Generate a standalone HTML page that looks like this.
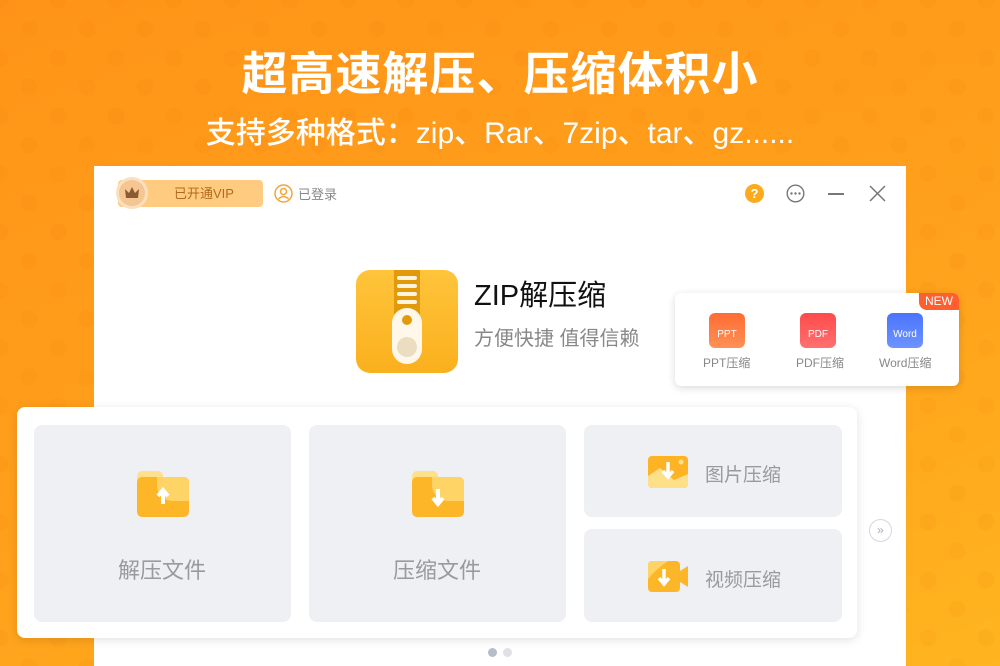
<!DOCTYPE html>
<html><head><meta charset="utf-8"><style>
*{margin:0;padding:0;box-sizing:border-box}
body{width:1000px;height:666px;overflow:hidden;position:relative;font-family:"Liberation Sans","Noto Sans CJK SC",sans-serif;
background:radial-gradient(circle,rgba(230,110,0,0.08) 8px,transparent 9px) 0 0/58px 58px,radial-gradient(circle,rgba(230,110,0,0.08) 8px,transparent 9px) 29px 29px/58px 58px,linear-gradient(160deg,#ff9418 0%,#ffa21c 60%,#ffb51f 100%);}
.abs{position:absolute}
h1{position:absolute;top:38px;width:1000px;text-align:center;color:#fff;font-size:46px;font-weight:bold;letter-spacing:1px}
h2{position:absolute;top:108px;width:1000px;text-align:center;color:#fff;font-size:30px;font-weight:500}
.win{position:absolute;left:94px;top:166px;width:812px;height:500px;background:#fff}
.card{position:absolute;background:#eff0f4;border-radius:8px;color:#9a9a9a}
</style></head><body>
<h1>超高速解压、压缩体积小</h1>
<h2>支持多种格式：zip、Rar、7zip、tar、gz......</h2>
<div class="win">
 <div class="abs" style="left:24px;top:14px;width:145px;height:27px;background:#ffcb80;border-radius:4px;color:#b26b1a;font-size:13px;line-height:27px;padding-left:56px">已开通VIP</div>
 <div class="abs" style="left:22px;top:11px;width:32px;height:32px;border-radius:50%;background:#f5c592;border:3px solid #fbe0bf"><svg style="position:absolute;left:5px;top:6px" width="16" height="14"><path d="M1 3 L5 7 L8 1 L11 7 L15 3 L14 12 L2 12 Z" fill="#8a5a34"/></svg></div>
 <svg class="abs" style="left:180px;top:18px" width="19" height="19"><circle cx="9.5" cy="9.5" r="8.5" fill="none" stroke="#f3a43a" stroke-width="1.5"/><circle cx="9.5" cy="7.5" r="3" fill="none" stroke="#f3a43a" stroke-width="1.5"/><path d="M4.5 15 Q9.5 10 14.5 15" fill="none" stroke="#f3a43a" stroke-width="1.5"/></svg>
 <div class="abs" style="left:204px;top:18px;font-size:13px;color:#888">已登录</div>
 <div class="abs" style="left:651px;top:18px;width:19px;height:19px;border-radius:50%;background:#fdaa1f;color:#fff;font-size:13px;font-weight:bold;text-align:center;line-height:19px">?</div>
 <svg class="abs" style="left:692px;top:18px" width="19" height="19"><circle cx="9.5" cy="9.5" r="8.3" fill="none" stroke="#777" stroke-width="1.4"/><circle cx="5.5" cy="9.5" r="1.2" fill="#777"/><circle cx="9.5" cy="9.5" r="1.2" fill="#777"/><circle cx="13.5" cy="9.5" r="1.2" fill="#777"/></svg>
 <div class="abs" style="left:734px;top:27px;width:16px;height:1.5px;background:#777"></div>
 <svg class="abs" style="left:775px;top:19px" width="17" height="17"><path d="M1 1 L16 16 M16 1 L1 16" stroke="#777" stroke-width="1.5"/></svg>
 <svg class="abs" style="left:262px;top:104px" width="102" height="103"><defs><linearGradient id="g" x1="0" y1="0" x2="0" y2="1"><stop offset="0" stop-color="#fec43b"/><stop offset="1" stop-color="#fbb01d"/></linearGradient></defs><rect width="102" height="103" rx="14" fill="url(#g)"/><rect x="38" y="0" width="26" height="50" fill="#e29a0c"/><g fill="#fff4dc"><rect x="41" y="6" width="20" height="4" rx="2"/><rect x="41" y="14" width="20" height="4" rx="2"/><rect x="41" y="22" width="20" height="4" rx="2"/><rect x="41" y="30" width="20" height="4" rx="2"/></g><rect x="36" y="38" width="30" height="56" rx="15" fill="#fff8ea"/><circle cx="51" cy="50" r="5" fill="#e29a0c"/><circle cx="51" cy="77" r="10" fill="#ecdcc0"/></svg>
 <div class="abs" style="left:380px;top:106px;font-size:29px;color:#111">ZIP解压缩</div>
 <div class="abs" style="left:380px;top:156px;font-size:20px;color:#888">方便快捷 值得信赖</div>
 <div class="abs" style="left:394px;top:482px;width:9px;height:9px;border-radius:50%;background:#b8bcc8"></div>
 <div class="abs" style="left:409px;top:482px;width:9px;height:9px;border-radius:50%;background:#dfe1e7"></div>
</div>
<div class="abs" style="left:675px;top:293px;width:284px;height:93px;background:#fff;border-radius:6px;box-shadow:0 2px 8px rgba(0,0,0,.15);overflow:hidden">
 <div class="abs" style="right:0;top:0;width:40px;height:17px;background:#ff5f2e;border-bottom-left-radius:8px;color:#fff;font-size:12px;text-align:center;line-height:17px">NEW</div>
 <div class="abs" style="left:34px;top:20px;width:36px;height:35px;border-radius:6px;background:linear-gradient(#ff6c34,#ff9055);color:#fff;font-size:10px;text-align:center;line-height:43px">PPT</div>
 <div class="abs" style="left:125px;top:20px;width:36px;height:35px;border-radius:6px;background:linear-gradient(#ff4a4a,#ff7070);color:#fff;font-size:10px;text-align:center;line-height:43px">PDF</div>
 <div class="abs" style="left:212px;top:20px;width:36px;height:35px;border-radius:6px;background:linear-gradient(#4a74fe,#6d93ff);color:#fff;font-size:10px;text-align:center;line-height:43px">Word</div>
 <div class="abs" style="left:28px;top:61px;font-size:12px;color:#888">PPT压缩</div>
 <div class="abs" style="left:121px;top:61px;font-size:12px;color:#888">PDF压缩</div>
 <div class="abs" style="left:204px;top:61px;font-size:12px;color:#888">Word压缩</div>
</div>
<div class="abs" style="left:17px;top:407px;width:840px;height:231px;background:#fff;border-radius:8px;box-shadow:0 2px 10px rgba(0,0,0,.12)">
 <div class="card" style="left:17px;top:18px;width:257px;height:197px">
  <svg class="abs" style="left:103px;top:46px" width="52" height="46"><rect x="0" y="0" width="26" height="14" rx="5" fill="#ffe08a"/><rect x="0" y="6" width="52" height="40" rx="5" fill="#fdb627"/><path d="M20 6 H47 a5 5 0 0 1 5 5 V30 H36 a16 16 0 0 1 -16 -16 Z" fill="#ffd466"/><path d="M26 33 V20 M21 25 L26 19 L31 25" stroke="#fff" stroke-width="4" fill="none"/></svg>
  <div class="abs" style="left:84px;top:128px;font-size:22px">解压文件</div></div>
 <div class="card" style="left:292px;top:18px;width:257px;height:197px">
  <svg class="abs" style="left:103px;top:46px" width="52" height="46"><rect x="0" y="0" width="26" height="14" rx="5" fill="#ffe08a"/><rect x="0" y="6" width="52" height="40" rx="5" fill="#fdb627"/><path d="M20 6 H47 a5 5 0 0 1 5 5 V30 H36 a16 16 0 0 1 -16 -16 Z" fill="#ffd466"/><path d="M26 18 V32 M21 27 L26 33 L31 27" stroke="#fff" stroke-width="4" fill="none"/></svg>
  <div class="abs" style="left:84px;top:128px;font-size:22px">压缩文件</div></div>
 <div class="card" style="left:567px;top:18px;width:258px;height:92px">
  <svg class="abs" style="left:64px;top:31px" width="40" height="32"><rect width="40" height="32" rx="4" fill="#fdb323"/><path d="M0 20 L12 12 L26 24 L40 18 V28 a4 4 0 0 1 -4 4 H4 a4 4 0 0 1 -4 -4Z" fill="#ffe08a"/><circle cx="33" cy="6" r="2.5" fill="#ffe08a"/><path d="M20 6 V20 M15 15 L20 21 L25 15" stroke="#fff" stroke-width="3.5" fill="none"/></svg>
  <div class="abs" style="left:121px;top:35px;font-size:19px">图片压缩</div></div>
 <div class="card" style="left:567px;top:122px;width:258px;height:93px">
  <svg class="abs" style="left:64px;top:32px" width="40" height="31"><rect width="32" height="31" rx="4" fill="#fdb627"/><path d="M0 4 a4 4 0 0 1 4 -4 H20 Q8 8 0 18Z" fill="#ffd466"/><path d="M32 10 L40 5 V26 L32 21Z" fill="#fdb627"/><path d="M16 8 V22 M11 17 L16 23 L21 17" stroke="#fff" stroke-width="3.5" fill="none"/></svg>
  <div class="abs" style="left:121px;top:36px;font-size:19px">视频压缩</div></div>
</div>
<div class="abs" style="left:869px;top:519px;width:23px;height:23px;border-radius:50%;border:1.5px solid #d5d7e0;background:#fff;color:#aab;font-size:12px;text-align:center;line-height:20px">»</div>
</body></html>
